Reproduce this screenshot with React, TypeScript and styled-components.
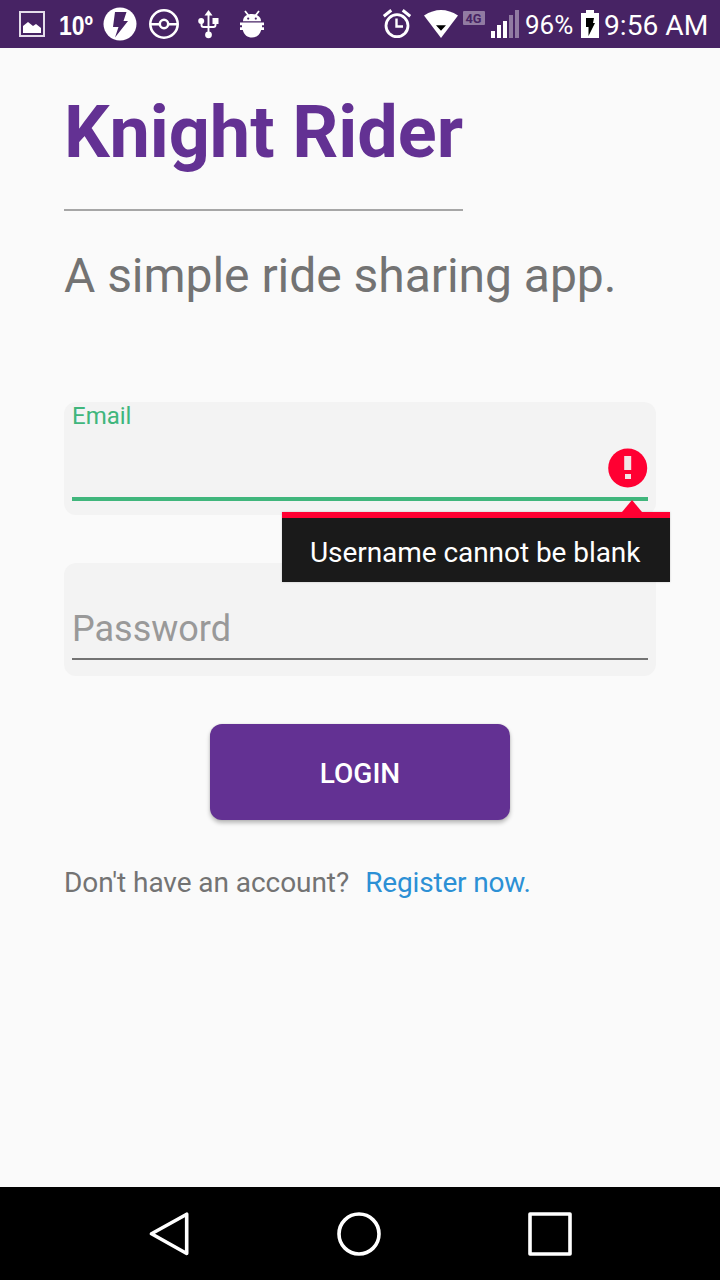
import React from "react";
import styled, { createGlobalStyle } from "styled-components";

const GlobalStyle = createGlobalStyle`
  *, *::before, *::after { box-sizing: border-box; }
  body { margin: 0; background: #fafafa; }
`;

const Screen = styled.div`
  display: flex;
  flex-direction: column;
  width: 720px;
  height: 1280px;
  overflow: hidden;
  background: #fafafa;
  font-family: Roboto, "Liberation Sans", sans-serif;
  color: #737373;
`;

const StatusBar = styled.header`
  display: flex;
  flex: none;
  justify-content: space-between;
  height: 48px;
  padding: 0 12px 0 16px;
  background: #472364;
  color: #fff;
`;

const StatusGroup = styled.div`
  display: flex;
  align-items: center;
`;

const StatusIcon = styled.svg<{ $gap?: number }>`
  display: block;
  flex: none;
  height: 48px;
  margin-left: ${(p) => p.$gap ?? 0}px;
  overflow: visible;
`;

const StatusText = styled.span<{ $size: number; $width: number; $gap?: number; $drop?: number }>`
  flex: none;
  width: ${(p) => p.$width}px;
  margin-left: ${(p) => p.$gap ?? 0}px;
  padding-top: ${(p) => p.$drop ?? 3}px;
  font-size: ${(p) => p.$size}px;
  line-height: 48px;
  white-space: nowrap;
`;

const Content = styled.main`
  display: flex;
  flex: 1;
  flex-direction: column;
  align-items: flex-start;
  padding: 43px 64px 0;
`;

const Title = styled.h1`
  width: 399px;
  height: 120px;
  margin: 0;
  border-bottom: 2px solid #a6a6a6;
  color: #633193;
  font-size: 72px;
  font-weight: 700;
  letter-spacing: -0.05px;
  line-height: 84px;
  white-space: nowrap;
`;

const Tagline = styled.p`
  margin: 37px 0 98px;
  font-size: 48px;
  letter-spacing: -0.04px;
  line-height: 56px;
  white-space: nowrap;
`;

const Form = styled.form`
  display: flex;
  flex-direction: column;
  align-items: center;
  gap: 48px;
  width: 100%;
`;

const Field = styled.div`
  position: relative;
  width: 100%;
  height: 113px;
  padding: 0 8px;
  border-radius: 12px;
  background: #f3f3f3;
`;

const InputLine = styled.div<{ $active?: boolean }>`
  display: flex;
  flex-direction: column;
  justify-content: ${(p) => (p.$active ? "space-between" : "flex-end")};
  height: ${(p) => (p.$active ? 99 : 97)}px;
  border-bottom: ${(p) => (p.$active ? "4px solid #40b67c" : "2px solid #737373")};
`;

const Label = styled.label`
  color: #40b67c;
  font-size: 24px;
  line-height: 28px;
`;

const Placeholder = styled.span`
  padding-bottom: 8px;
  color: #999;
  font-size: 36px;
  line-height: 42px;
`;

const ErrorIcon = styled.svg`
  display: block;
  align-self: flex-end;
  margin-bottom: 9px;
`;

const Tooltip = styled.div`
  position: absolute;
  z-index: 1;
  top: 110px;
  right: -14px;
  width: 388px;
  height: 70px;
  padding-left: 28px;
  border-top: 6px solid #ff0032;
  background: #1a1a1a;
  box-shadow: 0 0 2px rgba(0, 0, 0, 0.2);
  color: #fff;
  font-size: 28px;
  letter-spacing: -0.06px;
  line-height: 69px;
  white-space: nowrap;

  &::before {
    content: "";
    position: absolute;
    top: -18px;
    right: 28px;
    border: 10px solid transparent;
    border-top: 0;
    border-bottom: 12px solid #ff0032;
  }
`;

const LoginButton = styled.button`
  width: 300px;
  height: 96px;
  padding: 2px 0 0;
  border: 0;
  border-radius: 12px;
  background: #633193;
  box-shadow: 0 3px 4px rgba(0, 0, 0, 0.26), 0 0 2px rgba(0, 0, 0, 0.12);
  color: #fff;
  font-family: inherit;
  font-size: 28px;
  font-weight: 500;
`;

const Signup = styled.p`
  display: flex;
  gap: 16px;
  margin: 47px 0 0;
  font-size: 28px;
  letter-spacing: -0.06px;
  line-height: 32px;
  white-space: nowrap;
`;

const RegisterLink = styled.a`
  color: #2c90d5;
  letter-spacing: -0.16px;
`;

const NavBar = styled.nav`
  display: flex;
  flex: none;
  justify-content: space-between;
  align-items: center;
  height: 93px;
  padding: 0 148px 0 146px;
  background: #000;
`;

const NavIcon = styled.svg`
  display: block;
  fill: none;
  stroke: #fff;
  stroke-width: 3.6;
  stroke-linejoin: round;
`;

export default function App() {
  return (
    <Screen>
      <GlobalStyle />
      <StatusBar>
        <StatusGroup>
          {/* gallery */}
          <StatusIcon width="32" viewBox="16 0 32 48">
            <rect x="20" y="12" width="24" height="24" fill="none" stroke="#e4dcea" strokeWidth="2" />
            <path d="M23 33V26L28 22L33 26L36 24L41 28V33Z" fill="#fff" />
          </StatusIcon>
          {/* temperature, in condensed figures */}
          <StatusIcon width="36" $gap={11} viewBox="59 0 36 48">
            <text
              x="59"
              y="35"
              fontFamily="Liberation Sans, sans-serif"
              fontSize="28"
              fontWeight="700"
              fill="#fff"
              textLength="34"
              lengthAdjust="spacingAndGlyphs"
            >
              10º
            </text>
          </StatusIcon>
          {/* lightning badge */}
          <StatusIcon width="36" $gap={7} viewBox="102 0 36 48">
            <circle cx="120" cy="24" r="16.500" fill="#fff" />
            <path d="M115 12H126.500L123.500 21H128L115 37.500L118.500 27H113Z" fill="#472364" />
          </StatusIcon>
          {/* ball */}
          <StatusIcon width="32" $gap={10} viewBox="148 0 32 48" fill="none" stroke="#fff" strokeWidth="2.600">
            <circle cx="164" cy="24" r="13.700" />
            <circle cx="164" cy="24" r="4.200" strokeWidth="2.500" />
            <path d="M151 24.200H160M168 24.200H177" />
          </StatusIcon>
          {/* usb */}
          <StatusIcon width="24" $gap={16} viewBox="196 0 24 48">
            <path
              d="M208.500 33V12M201.500 22V25Q201.500 27 203.500 27H213.500Q215.500 27 215.500 25V21"
              fill="none"
              stroke="#fff"
              strokeWidth="1.900"
            />
            <path d="M204.500 15.500L208.500 10L212.500 15.500Z" fill="#fff" />
            <circle cx="208.500" cy="34.800" r="3.400" fill="#fff" />
            <circle cx="201.200" cy="21" r="3" fill="#fff" />
            <rect x="212.500" y="18" width="6" height="6" fill="#fff" />
          </StatusIcon>
          {/* debug bug */}
          <StatusIcon width="28" $gap={18} viewBox="238 0 28 48" fill="#fff">
            <path d="M243 21.200C243 16.500 247 14 252 14S261 16.500 261 21.200Z" />
            <path d="M245 11L248.500 15.500M259 11L255.500 15.500" stroke="#fff" strokeWidth="1.800" />
            <path d="M240 22.500H264V25.200H262V27.300H264V30H261.200C260 35 256.500 37.500 252 37.500S244 35 242.800 30H240V27.300H242V25.200H240Z" />
            <circle cx="248.200" cy="18.600" r="1.100" fill="#472364" />
            <circle cx="255.800" cy="18.600" r="1.100" fill="#472364" />
          </StatusIcon>
        </StatusGroup>
        <StatusGroup>
          {/* alarm */}
          <StatusIcon width="32" viewBox="381 0 32 48" fill="none" stroke="#fff">
            <circle cx="397" cy="25.700" r="11" strokeWidth="2.800" />
            <path d="M383.800 16.200L391.300 10.300M402.700 10.300L410.200 16.200" strokeWidth="3" />
            <path d="M396.500 18.500V26.500H403" strokeWidth="2.400" />
          </StatusIcon>
          {/* wifi */}
          <StatusIcon width="36" $gap={10} viewBox="423 0 36 48">
            <path d="M424 15.500Q441 4.500 458 15.500L441 38Z" fill="#fff" />
            <path d="M436 25.300H446L441 30.800Z" fill="#000" />
          </StatusIcon>
          {/* mobile network */}
          <StatusIcon width="23" $gap={4} viewBox="463 0 23 48">
            <rect x="463" y="11" width="22" height="14" rx="1" fill="#917ba2" />
            <text x="465.500" y="23" fontSize="13.500" fontWeight="700" fill="#472364" textLength="16" lengthAdjust="spacingAndGlyphs">
              4G
            </text>
          </StatusIcon>
          {/* signal strength */}
          <StatusIcon width="30" $gap={4} viewBox="490 0 30 48" fill="#fff">
            <path d="M491 31h4v7h-4zM497 25h4v13h-4zM503 21h4v17h-4z" />
            <path d="M509 15h4v23h-4zM515 10h4v28h-4z" fill="#917ba2" />
          </StatusIcon>
          <StatusText $size={26} $width={50} $gap={5} $drop={1}>96%</StatusText>
          {/* charging battery */}
          <StatusIcon width="19" $gap={6} viewBox="581 0 19 48">
            <path d="M581 13H586V10H594V13H599V38H581Z" fill="#fff" />
            <path d="M586 18H594L593 23H595L588.500 36V27H586Z" fill="#000" />
          </StatusIcon>
          <StatusText $size={28.2} $width={104} $gap={4}>9:56 AM</StatusText>
        </StatusGroup>
      </StatusBar>

      <Content>
        <Title>Knight Rider</Title>
        <Tagline>A simple ride sharing app.</Tagline>
        <Form>
          <Field>
            <InputLine $active>
              <Label>Email</Label>
              <ErrorIcon width="40" height="40" viewBox="0 0 40 40">
                <circle cx="19.700" cy="20" r="19.500" fill="#ff0032" />
                <path d="M16.200 8h7v14h-7zM17 26h6v5h-6z" fill="#f2e4e6" />
              </ErrorIcon>
            </InputLine>
            <Tooltip>Username cannot be blank</Tooltip>
          </Field>
          <Field>
            <InputLine>
              <Placeholder>Password</Placeholder>
            </InputLine>
          </Field>
          <LoginButton type="button">LOGIN</LoginButton>
        </Form>
        <Signup>
          <span>Don't have an account?</span>
          <RegisterLink>Register now.</RegisterLink>
        </Signup>
      </Content>

      <NavBar>
        <NavIcon width="44" height="44" viewBox="0 0 44 44">
          <path d="M40.700 2.200V41.500L5.500 21.800Z" />
        </NavIcon>
        <NavIcon width="44" height="44" viewBox="0 0 44 44">
          <circle cx="22" cy="22" r="20" />
        </NavIcon>
        <NavIcon width="44" height="44" viewBox="0 0 44 44">
          <rect x="2" y="2" width="40" height="40" />
        </NavIcon>
      </NavBar>
    </Screen>
  );
}
